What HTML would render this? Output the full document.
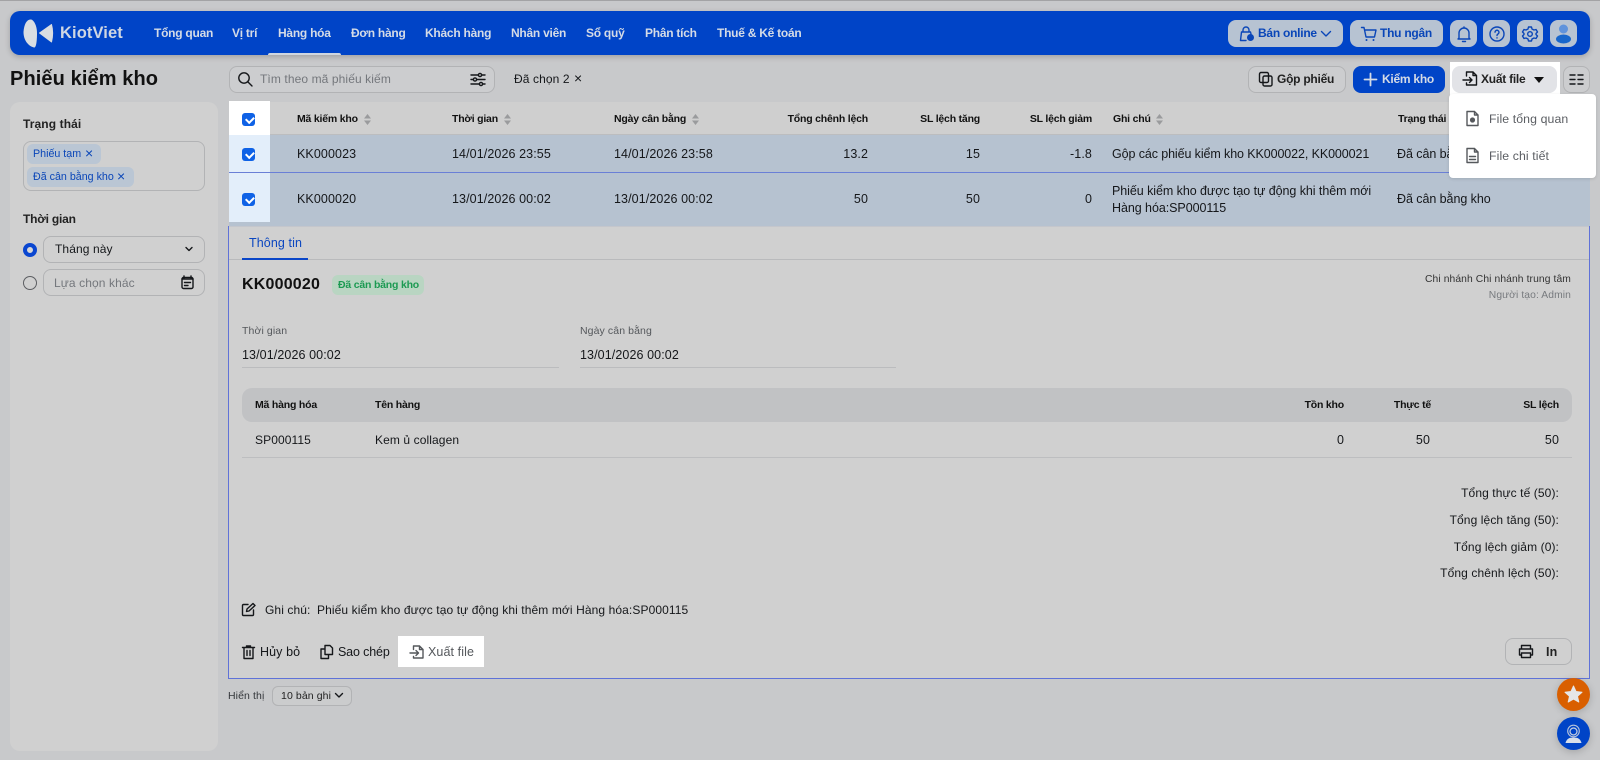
<!DOCTYPE html>
<html lang="vi"><head><meta charset="utf-8"><title>Phiếu kiểm kho</title>
<style>
*{box-sizing:border-box}
html,body{margin:0;padding:0}
body{width:1600px;height:760px;position:relative;overflow:hidden;background:#c8c9cb;font-family:"Liberation Sans",sans-serif;font-size:12.5px;color:#15171a}
.b,.t,svg{position:absolute}
.t{white-space:nowrap;line-height:16px;letter-spacing:.1px}
.r{text-align:right}
.h{font-weight:700;font-size:10.5px;letter-spacing:-.2px;color:#111}
.n{font-weight:700;font-size:12px;letter-spacing:-.25px;color:#d4dbe6;top:25px}
.m{font-weight:700;font-size:12px;letter-spacing:-.25px}
.x{font-size:12px}
.w{letter-spacing:-.06px}
.g{color:#74777c}
.btn{position:absolute;border:1px solid #b2b3b5;border-radius:8px;background:#cccdcf}
.top{position:absolute;top:20px;height:27px;border-radius:8px;background:#b7c3d2}
.ck{position:absolute;left:242px;width:13px;height:13px;border-radius:3px;background:#0f62e6}
.ck:after{content:"";position:absolute;left:4.5px;top:2px;width:3.5px;height:6px;border:solid #fff;border-width:0 2px 2px 0;transform:rotate(45deg)}
.s{fill:none;stroke:#15171a;stroke-width:1.4;stroke-linecap:round;stroke-linejoin:round}
.bl{stroke:#0a46b8}
.gr{stroke:#55585c}
</style></head><body>
<div class="b" style="left:0;top:0;width:1600px;height:1px;background:#a3a3a5"></div>

<!-- Header -->
<div class="b" style="left:10px;top:11px;width:1580px;height:44px;background:#0044c7;border-radius:10px;box-shadow:0 2px 6px rgba(0,0,0,.2)"></div>
<svg style="left:22px;top:18px" width="32" height="32" viewBox="0 0 32 32"><path d="M9 1.500C5 1 2 6 1.500 14C1.500 22 6 28 12 29.500C14 30 15 24 15 15C15 8 12 2 9 1.500Z" fill="#d9dde2"/><path d="M29.500 6.500L17.500 15L29.500 24C31 18 31 12 29.500 6.500Z" fill="#d9dde2" stroke="#d9dde2" stroke-linejoin="round"/></svg>
<div class="t" style="left:60px;top:22px;font-size:16.5px;line-height:22px;font-weight:700;color:#cfd7e3;letter-spacing:.1px">KiotViet</div>
<div class="t n" style="left:154px">Tổng quan</div>
<div class="t n" style="left:232px">Vị trí</div>
<div class="t n" style="left:278px">Hàng hóa</div>
<div class="t n" style="left:351px">Đơn hàng</div>
<div class="t n" style="left:425px">Khách hàng</div>
<div class="t n" style="left:511px">Nhân viên</div>
<div class="t n" style="left:586px">Sổ quỹ</div>
<div class="t n" style="left:645px">Phân tích</div>
<div class="t n" style="left:717px">Thuế &amp; Kế toán</div>
<div class="b" style="left:268px;top:53px;width:73px;height:2px;background:#cfd6e0;border-radius:2px 2px 0 0"></div>

<div class="top" style="left:1228px;width:115px"></div>
<div class="top" style="left:1350px;width:93px"></div>
<div class="top" style="left:1450px;width:27px"></div>
<div class="top" style="left:1483px;width:27px"></div>
<div class="top" style="left:1517px;width:26px"></div>
<div class="top" style="left:1550px;width:27px"></div>
<svg style="left:1238px;top:25px" width="18" height="18" viewBox="0 0 18 18"><path class="s bl" d="M5 7V5a3 3 0 0 1 6 0v2M3.500 7H12.500L13 9M8 15.500H2.500L3.500 7"/><circle cx="12.500" cy="12.500" r="3.500" fill="#0a46b8"/></svg>
<div class="t m" style="left:1258px;top:25px;color:#0a46b8">Bán online</div>
<svg style="left:1320px;top:29px" width="12" height="10" viewBox="0 0 12 10"><path class="s bl" d="M1.500 2.500L6 7L10.500 2.500"/></svg>
<svg style="left:1360px;top:25px" width="18" height="18" viewBox="0 0 18 18"><path class="s bl" d="M1.500 2.500H4L6 12H14.500L16 5H4.500"/><circle cx="6.500" cy="15" r="1" fill="#0a46b8"/><circle cx="13.500" cy="15" r="1" fill="#0a46b8"/></svg>
<div class="t m" style="left:1380px;top:25px;color:#0a46b8">Thu ngân</div>
<svg style="left:1455px;top:25px" width="18" height="18" viewBox="0 0 18 18"><path class="s bl" d="M4 13V8a5 5 0 0 1 10 0v5l1 1H3ZM7.500 16.500H10.500M9 3V2"/></svg>
<svg style="left:1488px;top:25px" width="18" height="18" viewBox="0 0 18 18"><circle class="s bl" cx="9" cy="9" r="7"/><path class="s bl" d="M7 7.200a2 2 0 1 1 3 1.800c-.7.400-1 .8-1 1.500M9 12.800V13"/></svg>
<svg style="left:1521px;top:25px" width="18" height="18" viewBox="0 0 18 18"><circle class="s bl" cx="9" cy="9" r="2.300"/><path class="s bl" d="M7.500 2H10.500L11 4L13 5L15 4.500L16.500 7L15 8.500V9.500L16.500 11L15 13.500L13 13L11 14L10.500 16H7.500L7 14L5 13L3 13.500L1.500 11L3 9.500V8.500L1.500 7L3 4.500L5 5L7 4Z"/></svg>
<svg style="left:1553px;top:23px" width="21" height="21" viewBox="0 0 21 21"><circle cx="10.500" cy="6" r="4.500" fill="#5f93dc"/><ellipse cx="10.500" cy="16" rx="7.500" ry="4.500" fill="#1766cc"/></svg>

<!-- Title row -->
<div class="t" style="left:10px;top:67px;font-size:20px;line-height:24px;font-weight:700;color:#111;letter-spacing:.1px">Phiếu kiểm kho</div>
<div class="btn" style="left:229px;top:66px;width:266px;height:27px"></div>
<svg style="left:237px;top:71px" width="17" height="17" viewBox="0 0 17 17"><circle class="s" stroke-width="1.200" cx="7" cy="7" r="5.200"/><path class="s" stroke-width="1.200" d="M11 11L15 15"/></svg>
<div class="t g x" style="left:260px;top:71px">Tìm theo mã phiếu kiếm</div>
<svg style="left:470px;top:72px" width="16" height="15" viewBox="0 0 16 15"><path class="s" stroke-width="1.100" d="M1 3H8M12 3H15M1 7.500H3M7 7.500H15M1 12H9M13 12H15"/><circle class="s" stroke-width="1.100" cx="10" cy="3" r="1.600"/><circle class="s" stroke-width="1.100" cx="5" cy="7.500" r="1.600"/><circle class="s" stroke-width="1.100" cx="11" cy="12" r="1.600"/></svg>
<div class="t x" style="left:514px;top:71px">Đã chọn 2</div>
<div class="t" style="left:574px;top:70px;font-size:14px">×</div>

<div class="btn" style="left:1248px;top:66px;width:98px;height:27px"></div>
<svg style="left:1258px;top:71px" width="16" height="17" viewBox="0 0 16 17"><rect class="s" x="1.500" y="1.500" width="9" height="10" rx="1.500"/><rect class="s" x="5" y="5" width="9" height="10" rx="1.500"/></svg>
<div class="t m" style="left:1277px;top:71px;color:#222">Gộp phiếu</div>
<div class="b" style="left:1353px;top:66px;width:92px;height:27px;background:#0044c7;border-radius:8px"></div>
<svg style="left:1363px;top:72px" width="15" height="15" viewBox="0 0 15 15"><path d="M7.500 1.500V13.500M1.500 7.500H13.500" stroke="#d4dbe6" stroke-width="1.800" fill="none" stroke-linecap="round"/></svg>
<div class="t m" style="left:1382px;top:71px;color:#d4dbe6">Kiểm kho</div>

<div class="b" style="left:1450px;top:62px;width:110px;height:36px;background:#fff"></div>
<div class="b" style="left:1452px;top:66px;width:105px;height:27px;background:#e2e3e7;border-radius:8px"></div>
<svg style="left:1462px;top:70px" width="17" height="18" viewBox="0 0 17 18"><path class="s" d="M1 10H10M7.500 7.500L10 10L7.500 12.500M4.500 6V2H11L14.500 5.500V15H4.500V13M11 2V5.500H14.500"/></svg>
<div class="t m" style="left:1481px;top:71px;color:#222">Xuất file</div>
<div class="b" style="left:1534px;top:77px;width:0;height:0;border-left:5px solid transparent;border-right:5px solid transparent;border-top:6px solid #111"></div>
<div class="btn" style="left:1563px;top:66px;width:27px;height:27px"></div>
<svg style="left:1569px;top:72px" width="15" height="15" viewBox="0 0 15 15"><path class="s" stroke-width="1.500" stroke-linecap="butt" d="M1 3H6M9 3H14M1 7.500H6M9 7.500H14M1 12H6M9 12H14"/></svg>

<!-- Sidebar -->
<div class="b" style="left:10px;top:102px;width:208px;height:649px;background:#d0d0d0;border-radius:10px"></div>
<div class="t" style="left:23px;top:116px;font-weight:700;font-size:12px;color:#222">Trạng thái</div>
<div class="btn" style="left:23px;top:141px;width:182px;height:50px;background:#d0d0d0"></div>
<div class="b" style="left:27px;top:144px;width:74px;height:20px;background:#bac6d4;border-radius:6px"></div>
<div class="t" style="left:33px;top:146px;font-size:10.700px;letter-spacing:0;color:#0a46b8">Phiếu tạm</div>
<div class="t" style="left:85px;top:145px;font-size:14px;color:#0a46b8">×</div>
<div class="b" style="left:27px;top:167px;width:107px;height:20px;background:#bac6d4;border-radius:6px"></div>
<div class="t" style="left:33px;top:169px;font-size:10.700px;letter-spacing:0;color:#0a46b8">Đã cân bằng kho</div>
<div class="t" style="left:117px;top:168px;font-size:14px;color:#0a46b8">×</div>
<div class="t" style="left:23px;top:211px;font-weight:700;font-size:12px;letter-spacing:-.2px;color:#222">Thời gian</div>
<div class="b" style="left:23px;top:243px;width:14px;height:14px;border-radius:50%;border:4px solid #0a46d0;background:#d8d8d8"></div>
<div class="btn" style="left:43px;top:236px;width:162px;height:27px;background:#d0d0d0"></div>
<div class="t x" style="left:55px;top:241px">Tháng này</div>
<svg style="left:183px;top:245px" width="12" height="9" viewBox="0 0 12 9"><path class="s" stroke-width="1" d="M3 2.500L6 5.500L9 2.500"/></svg>
<div class="b" style="left:23px;top:276px;width:14px;height:14px;border-radius:50%;border:1px solid #5c5e62"></div>
<div class="btn" style="left:43px;top:269px;width:162px;height:27px;background:#d0d0d0"></div>
<div class="t g x" style="left:54px;top:275px">Lựa chọn khác</div>
<svg style="left:180px;top:275px" width="15" height="15" viewBox="0 0 15 15"><rect class="s" x="2" y="2.500" width="11" height="11" rx="1.500"/><path class="s" stroke-width="2" stroke-linecap="butt" d="M2 4H13"/><path class="s" stroke-linecap="butt" d="M4 1V3M11 1V3M4.500 7.500H10.500M4.500 10.500H8"/></svg>

<!-- Table -->
<div class="b" style="left:229px;top:102px;width:1361px;height:33px;background:#cfcfcf;border-bottom:1px solid #bcbdbf;border-radius:8px 8px 0 0"></div>
<div class="b" style="left:229px;top:135px;width:1361px;height:37px;background:#b6c2d0"></div>
<div class="b" style="left:229px;top:172px;width:1361px;height:55px;background:#b6c2d0;border-top:1px solid #6a7fd6"></div>
<div class="b" style="left:229px;top:101px;width:41px;height:34px;background:#fff"></div>
<div class="b" style="left:229px;top:135px;width:41px;height:37px;background:#e3eefa"></div>
<div class="b" style="left:229px;top:173px;width:41px;height:49px;background:#e3eefa"></div>
<div class="ck" style="top:113px"></div>
<div class="ck" style="top:148px"></div>
<div class="ck" style="top:193px"></div>

<div class="t h" style="left:297px;top:111px">Mã kiếm kho</div>
<div class="t h" style="left:452px;top:111px">Thời gian</div>
<div class="t h" style="left:614px;top:111px">Ngày cân bằng</div>
<div class="t h r" style="right:732px;top:111px">Tổng chênh lệch</div>
<div class="t h r" style="right:620px;top:111px">SL lệch tăng</div>
<div class="t h r" style="right:508px;top:111px">SL lệch giảm</div>
<div class="t h" style="left:1113px;top:111px">Ghi chú</div>
<div class="t h" style="left:1398px;top:111px">Trạng thái</div>
<svg style="left:363px;top:113px" width="9" height="13" viewBox="0 0 9 13"><path d="M4.500 1L8 5.500H1ZM4.500 12L8 7.500H1Z" fill="#9a9b9d"/></svg>
<svg style="left:503px;top:113px" width="9" height="13" viewBox="0 0 9 13"><path d="M4.500 1L8 5.500H1ZM4.500 12L8 7.500H1Z" fill="#9a9b9d"/></svg>
<svg style="left:691px;top:113px" width="9" height="13" viewBox="0 0 9 13"><path d="M4.500 1L8 5.500H1ZM4.500 12L8 7.500H1Z" fill="#9a9b9d"/></svg>
<svg style="left:1155px;top:113px" width="9" height="13" viewBox="0 0 9 13"><path d="M4.500 1L8 5.500H1ZM4.500 12L8 7.500H1Z" fill="#9a9b9d"/></svg>

<div class="t" style="left:297px;top:146px">KK000023</div>
<div class="t" style="left:452px;top:146px">14/01/2026 23:55</div>
<div class="t" style="left:614px;top:146px">14/01/2026 23:58</div>
<div class="t r" style="right:732px;top:146px">13.2</div>
<div class="t r" style="right:620px;top:146px">15</div>
<div class="t r" style="right:508px;top:146px">-1.8</div>
<div class="t w" style="left:1112px;top:146px;letter-spacing:-.1px">Gộp các phiếu kiểm kho KK000022, KK000021</div>
<div class="t w" style="left:1397px;top:146px">Đã cân bằng kho</div>

<div class="t" style="left:297px;top:191px">KK000020</div>
<div class="t" style="left:452px;top:191px">13/01/2026 00:02</div>
<div class="t" style="left:614px;top:191px">13/01/2026 00:02</div>
<div class="t r" style="right:732px;top:191px">50</div>
<div class="t r" style="right:620px;top:191px">50</div>
<div class="t r" style="right:508px;top:191px">0</div>
<div class="t w" style="left:1112px;top:183px">Phiếu kiểm kho được tạo tự động khi thêm mới</div>
<div class="t w" style="left:1112px;top:200px">Hàng hóa:SP000115</div>
<div class="t w" style="left:1397px;top:191px">Đã cân bằng kho</div>

<!-- Detail -->
<div class="b" style="left:228px;top:226px;width:1362px;height:453px;background:#d0d0d0;border:1px solid #5f72d8;border-top:0"></div>
<div class="b" style="left:229px;top:226px;width:1360px;height:1px;background:#c4c6cc"></div>
<div class="b" style="left:229px;top:259px;width:1360px;height:1px;background:#b9babc"></div>
<div class="t" style="left:249px;top:235px;font-size:12.500px;color:#0a46c0">Thông tin</div>
<div class="b" style="left:242px;top:258px;width:66px;height:2px;background:#0a46c8"></div>

<div class="t" style="left:242px;top:276px;font-size:16px;line-height:18px;font-weight:700;color:#111;letter-spacing:.2px">KK000020</div>
<div class="b" style="left:332px;top:275px;width:92px;height:20px;background:#b9d5c2;border-radius:6px"></div>
<div class="t" style="left:338px;top:277px;font-size:10.500px;letter-spacing:-.2px;font-weight:700;color:#1c9a52">Đã cân bằng kho</div>
<div class="t r" style="right:29px;top:272px;font-size:10.300px;color:#333">Chi nhánh Chi nhánh trung tâm</div>
<div class="t r" style="right:29px;top:288px;font-size:10.300px;color:#777a7e">Người tạo: Admin</div>

<div class="t" style="left:242px;top:323px;font-size:10.500px;color:#55585c">Thời gian</div>
<div class="t" style="left:580px;top:323px;font-size:10.500px;color:#55585c">Ngày cân bằng</div>
<div class="t" style="left:242px;top:347px">13/01/2026 00:02</div>
<div class="t" style="left:580px;top:347px">13/01/2026 00:02</div>
<div class="b" style="left:242px;top:367px;width:317px;height:1px;background:#bbbcbe"></div>
<div class="b" style="left:580px;top:367px;width:316px;height:1px;background:#bbbcbe"></div>

<div class="b" style="left:242px;top:388px;width:1330px;height:34px;background:#c1c2c4;border-radius:10px"></div>
<div class="t h" style="left:255px;top:397px">Mã hàng hóa</div>
<div class="t h" style="left:375px;top:397px">Tên hàng</div>
<div class="t h r" style="right:256px;top:397px">Tồn kho</div>
<div class="t h r" style="right:169px;top:397px">Thực tế</div>
<div class="t h r" style="right:41px;top:397px">SL lệch</div>
<div class="t x" style="left:255px;top:432px">SP000115</div>
<div class="t x" style="left:375px;top:432px">Kem ủ collagen</div>
<div class="t r" style="right:256px;top:432px">0</div>
<div class="t r" style="right:170px;top:432px">50</div>
<div class="t r" style="right:41px;top:432px">50</div>
<div class="b" style="left:242px;top:457px;width:1330px;height:1px;background:#bdbec0"></div>

<div class="t r x" style="right:41px;top:485px">Tổng thực tế (50):</div>
<div class="t r x" style="right:41px;top:512px">Tổng lệch tăng (50):</div>
<div class="t r x" style="right:41px;top:539px">Tổng lệch giảm (0):</div>
<div class="t r x" style="right:41px;top:565px">Tổng chênh lệch (50):</div>

<svg style="left:241px;top:602px" width="15" height="15" viewBox="0 0 15 15"><path class="s" d="M7 2.500H2.500A1 1 0 0 0 1.500 3.500V12.500A1 1 0 0 0 2.500 13.500H11.500A1 1 0 0 0 12.500 12.500V8"/><path class="s" d="M5.500 9.500L6 7L12 1.500L14 3.500L8 9Z"/></svg>
<div class="t x" style="left:265px;top:602px">Ghi chú:</div>
<div class="t x" style="left:317px;top:602px">Phiếu kiểm kho được tạo tự động khi thêm mới Hàng hóa:SP000115</div>

<svg style="left:241px;top:644px" width="15" height="16" viewBox="0 0 15 16"><path class="s" d="M1.500 3.500H13.500M5.500 3.500V2H9.500V3.500M3 3.500V14.500H12V3.500M6 6.500V11.500M9 6.500V11.500"/></svg>
<div class="t" style="left:260px;top:644px">Hủy bỏ</div>
<svg style="left:319px;top:644px" width="15" height="16" viewBox="0 0 15 16"><path class="s" d="M6 1.500H11L13.500 4V10.500H6ZM6 5H2V14.500H9.500V10.500"/></svg>
<div class="t" style="left:338px;top:644px;letter-spacing:-.15px">Sao chép</div>
<div class="b" style="left:398px;top:636px;width:86px;height:31px;background:#fff"></div>
<svg style="left:409px;top:644px" width="16" height="16" viewBox="0 0 16 16"><path class="s gr" d="M1 9H9.500M7 6.500L9.500 9L7 11.500M4.500 5.500V2H10.500L14 5.500V14H4.500V12.500M10.500 2V5.500H14"/></svg>
<div class="t" style="left:428px;top:644px;color:#55585c">Xuất file</div>
<div class="btn" style="left:1505px;top:638px;width:67px;height:27px;background:#d0d0d0"></div>
<svg style="left:1518px;top:644px" width="16" height="15" viewBox="0 0 16 15"><path class="s" d="M3.500 5V1.500H12.500V5M3.500 11H1.500V5H14.500V11H12.500M3.500 9H12.500V13.500H3.500Z"/></svg>
<div class="t" style="left:1546px;top:644px;font-weight:700;color:#222">In</div>

<!-- Footer -->
<div class="t" style="left:228px;top:688px;font-size:10.500px;color:#33363a">Hiển thị</div>
<div class="btn" style="left:272px;top:686px;width:80px;height:20px;background:#cbcccd;border-radius:6px"></div>
<div class="t" style="left:281px;top:688px;font-size:10.500px;color:#222">10 bản ghi</div>
<svg style="left:333px;top:691px" width="12" height="9" viewBox="0 0 12 9"><path class="s" stroke-width="1" d="M2.500 2.500L6 6L9.500 2.500"/></svg>

<!-- FAB -->
<div class="b" style="left:1557px;top:678px;width:33px;height:33px;border-radius:50%;background:#d95f00;box-shadow:0 2px 8px rgba(0,0,0,.18)"></div>
<svg style="left:1564px;top:685px" width="19" height="18" viewBox="0 0 19 18"><path d="M9.500 1L12 6.500L18 7.200L13.500 11.300L14.800 17L9.500 14.100L4.200 17L5.500 11.300L1 7.200L7 6.500Z" fill="#e6e6e6" stroke="#e6e6e6" stroke-linejoin="round"/></svg>
<div class="b" style="left:1557px;top:717px;width:33px;height:33px;border-radius:50%;background:#0044c7;box-shadow:0 2px 8px rgba(0,0,0,.18)"></div>
<svg style="left:1564px;top:724px" width="19" height="20" viewBox="0 0 19 20"><circle cx="9.500" cy="7" r="5.800" fill="none" stroke="#b9c6dc" stroke-width="1.100"/><circle cx="9.500" cy="7.500" r="3.500" fill="none" stroke="#c8d2e2" stroke-width="1.200"/><path d="M1.500 19C2.500 15 5 13.500 9.500 13.500S16.500 15 17.500 19Z" fill="#d8dfe9"/></svg>

<!-- Dropdown -->
<div class="b" style="left:1449px;top:94px;width:147px;height:84px;background:#fff;border-radius:4px;box-shadow:0 1px 3px rgba(0,0,0,.12)"></div>
<svg style="left:1465px;top:110px" width="15" height="17" viewBox="0 0 15 17"><path class="s gr" d="M2 1.500H9.500L13 5V15.500H2ZM9.500 1.500V5H13"/><circle cx="7.500" cy="10" r="2.600" fill="#55585c"/></svg>
<div class="t" style="left:1489px;top:111px;font-size:12.300px;color:#5b5e63">File tổng quan</div>
<svg style="left:1465px;top:147px" width="15" height="17" viewBox="0 0 15 17"><path class="s gr" d="M2 1.500H9.500L13 5V15.500H2ZM9.500 1.500V5H13M4.500 9.500H10.500M4.500 12.500H10.500"/></svg>
<div class="t" style="left:1489px;top:148px;font-size:12.300px;color:#5b5e63">File chi tiết</div>
</body></html>
